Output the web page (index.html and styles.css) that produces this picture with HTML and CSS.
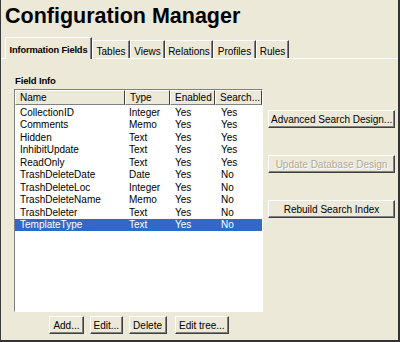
FILE: index.html
```html
<!DOCTYPE html>
<html>
<head>
<meta charset="utf-8">
<link rel="stylesheet" href="styles.css">
</head>
<body>
<div class="window">
  <h1 class="title">Configuration Manager</h1>
  <div class="tabs">
    <div class="tab active t-info">Information Fields</div>
    <div class="tab t-tables">Tables</div>
    <div class="tab t-views">Views</div>
    <div class="tab t-rel">Relations</div>
    <div class="tab t-prof">Profiles</div>
    <div class="tab t-rules">Rules</div>
  </div>
  <div class="panel">
    <div class="left">
      <div class="label">Field Info</div>
      <div class="listbox">
        <div class="lv-head">
          <div class="hcell">Name</div>
          <div class="hcell">Type</div>
          <div class="hcell">Enabled</div>
          <div class="hcell">Search...</div>
        </div>
        <div class="lv-body">
          <div class="row"><span class="c1">CollectionID</span><span class="c2">Integer</span><span class="c3">Yes</span><span class="c4">Yes</span></div>
          <div class="row"><span class="c1">Comments</span><span class="c2">Memo</span><span class="c3">Yes</span><span class="c4">Yes</span></div>
          <div class="row"><span class="c1">Hidden</span><span class="c2">Text</span><span class="c3">Yes</span><span class="c4">Yes</span></div>
          <div class="row"><span class="c1">InhibitUpdate</span><span class="c2">Text</span><span class="c3">Yes</span><span class="c4">Yes</span></div>
          <div class="row"><span class="c1">ReadOnly</span><span class="c2">Text</span><span class="c3">Yes</span><span class="c4">Yes</span></div>
          <div class="row"><span class="c1">TrashDeleteDate</span><span class="c2">Date</span><span class="c3">Yes</span><span class="c4">No</span></div>
          <div class="row"><span class="c1">TrashDeleteLoc</span><span class="c2">Integer</span><span class="c3">Yes</span><span class="c4">No</span></div>
          <div class="row"><span class="c1">TrashDeleteName</span><span class="c2">Memo</span><span class="c3">Yes</span><span class="c4">No</span></div>
          <div class="row"><span class="c1">TrashDeleter</span><span class="c2">Text</span><span class="c3">Yes</span><span class="c4">No</span></div>
          <div class="row sel"><span class="c1">TemplateType</span><span class="c2">Text</span><span class="c3">Yes</span><span class="c4">No</span></div>
        </div>
      </div>
      <div class="btnrow">
        <button class="btn">Add...</button>
        <button class="btn b-edit">Edit...</button>
        <button class="btn">Delete</button>
        <button class="btn b-tree">Edit tree...</button>
      </div>
    </div>
    <div class="right">
      <button class="btn wide">Advanced Search Design...</button>
      <button class="btn wide disabled">Update Database Design</button>
      <button class="btn wide">Rebuild Search Index</button>
    </div>
  </div>
</div>
</body>
</html>
```
FILE: styles.css
```css
* { box-sizing: border-box; }
html, body { margin: 0; padding: 0; }
body { font-family: "Liberation Sans", Arial, sans-serif; font-size: 10px; color: #000; }

.window {
  width: 400px;
  height: 342px;
  background: #ece9d8;
  border-left: 1px solid #3c3c3c;
  border-right: 2px solid #333;
  border-bottom: 2px solid #333;
  overflow: hidden;
}

.title {
  margin: 0;
  padding: 4px 0 0 4px;
  font-size: 21.5px;
  line-height: 24px;
  font-weight: bold;
}

.tabs {
  display: flex;
  align-items: flex-end;
  height: 21px;
  margin-top: 9px;
  margin-left: 4px;
}

.tab {
  flex: none;
  height: 18px;
  padding: 5px 0 0;
  text-align: center;
  line-height: 12px;
  font-size: 10px;
  white-space: nowrap;
  overflow: hidden;
  border-top: 1px solid #fff;
  border-left: 1px solid #fff;
  border-right: 1px solid #404040;
  box-shadow: inset -1px 0 #808080;
}

.tab.active {
  position: relative;
  z-index: 1;
  height: 22px;
  margin-bottom: -1px;
  padding: 7px 0 0;
  line-height: 11px;
  font-size: 9.3px;
  letter-spacing: -0.15px;
  font-weight: bold;
  background: #ece9d8;
}

.t-info { width: 87px; }
.t-tables { width: 38px; }
.t-views { width: 35px; }
.t-rel { width: 48px; }
.t-prof { width: 43px; }
.t-rules { width: 33px; }

.panel {
  display: flex;
  border-top: 1px solid #fff;
}

.left {
  padding-left: 13px;
  width: 262px;
}

.label {
  margin-top: 16px;
  padding-left: 1px;
  font-size: 9.5px;
  letter-spacing: -0.15px;
  font-weight: bold;
  line-height: 11px;
}

.listbox {
  margin-top: 3px;
  width: 249px;
  height: 223px;
  background: #fff;
  border: 1px solid;
  border-color: #808080 #fff #fff #808080;
}

.lv-head, .row {
  display: grid;
  grid-template-columns: 110px 45px 45px 47px;
}

.lv-head {
  height: 15px;
  background: #ece9d8;
}

.hcell {
  padding-left: 4px;
  line-height: 13px;
  white-space: nowrap;
  overflow: hidden;
  border-top: 1px solid #fff;
  border-left: 1px solid #fff;
  border-right: 1px solid #404040;
  border-bottom: 1px solid #808080;
}

.lv-body { padding-top: 2px; }

.row {
  height: 12.45px;
  line-height: 12.45px;
  white-space: nowrap;
}

.row span { overflow: hidden; }
.c1 { padding-left: 5px; }
.c2 { padding-left: 4px; }
.c3 { padding-left: 5px; }
.c4 { padding-left: 6px; }

.row.sel {
  background: #316ac5;
  color: #fff;
}

.btnrow {
  display: flex;
  justify-content: center;
  gap: 6px;
  margin-top: 4px;
  padding-left: 1px;
}

.btn {
  height: 18px;
  padding: 0 3.5px;
  font-family: "Liberation Sans", Arial, sans-serif;
  font-size: 10px;
  line-height: 15px;
  color: #000;
  background: #ece9d8;
  border: 1px solid;
  border-color: #fff #404040 #404040 #fff;
  box-shadow: inset -1px -1px #808080;
  white-space: nowrap;
}

.b-edit { padding: 0 2.5px; }
.b-tree { margin-left: 2px; }

.right {
  display: flex;
  flex-direction: column;
  gap: 27px;
  padding-top: 51px;
  margin-left: 5px;
  width: 127px;
}

.btn.wide { width: 127px; padding: 0 2px; }

.btn.disabled {
  color: #aca899;
  text-shadow: 1px 1px #fff;
}
```
